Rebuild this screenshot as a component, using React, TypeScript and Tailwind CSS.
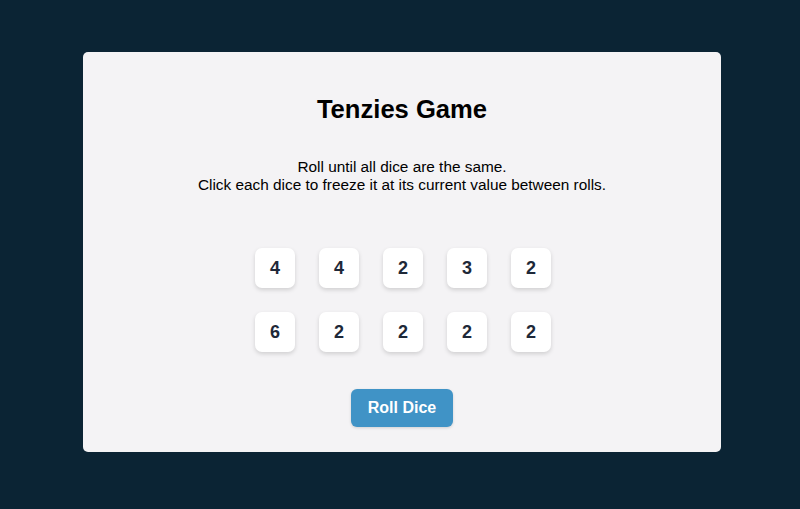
import React from 'react'

const dice = [4, 4, 2, 3, 2, 6, 2, 2, 2, 2]

function Die({ value }: { value: number }) {
  return (
    <button className="w-10 h-10 rounded-[7px] bg-white flex items-center justify-center text-[18px] font-bold text-[#1e2838] shadow-[0_2px_4px_rgba(0,0,0,0.15)]">
      {value}
    </button>
  )
}

export default function App() {
  return (
    <main className="w-full h-[509px] bg-[#0b2434] flex items-start justify-center pt-[52px] pl-[4px]" style={{ fontFamily: '"Liberation Sans", Arial, sans-serif' }}>
      <div className="w-[638px] h-[400px] bg-[#f4f3f5] rounded-[5px] flex flex-col items-center pt-[42px]">
        <h1 className="text-[25.6px] leading-[30px] font-bold text-black">Tenzies Game</h1>
        <p className="mt-[34px] text-[15.36px] leading-[18px] text-black text-center">
          Roll until all dice are the same.
          <br />
          Click each dice to freeze it at its current value between rolls.
        </p>
        <div className="mt-[54px] grid grid-cols-5 gap-6 pl-[2px]">
          {dice.map((d, i) => (
            <Die key={i} value={d} />
          ))}
        </div>
        <button className="mt-[37px] w-[102px] h-[38px] rounded-[6px] bg-[#4093c6] text-white font-bold text-[16px] shadow-[0_1px_3px_rgba(0,0,0,0.15)]">
          Roll Dice
        </button>
      </div>
    </main>
  )
}
